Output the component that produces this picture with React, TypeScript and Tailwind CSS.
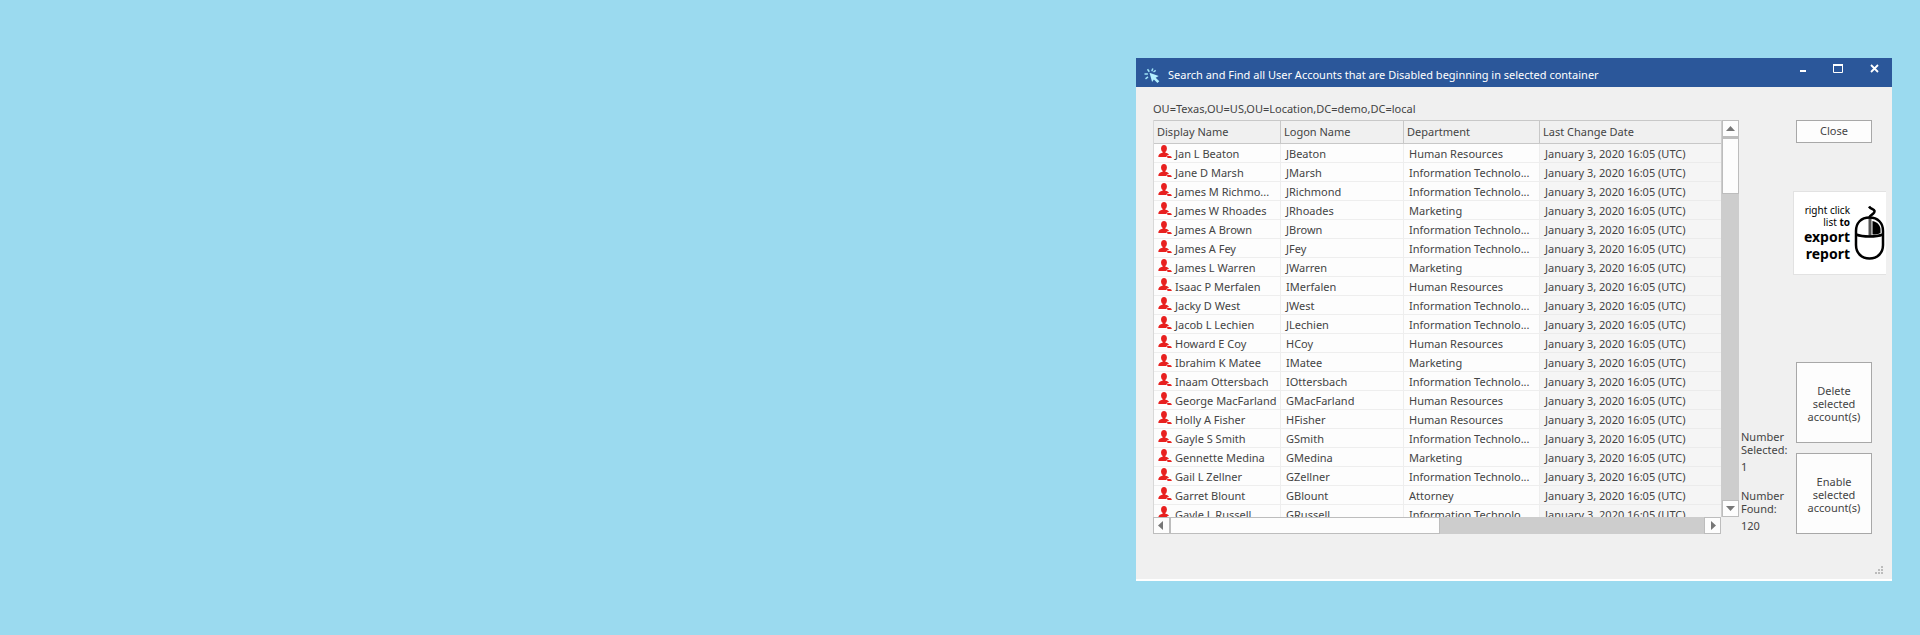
import type { ReactNode } from "react";

// long names are shortened the way the list shows them
const IT = "Information Technolo...";
const HR = "Human Resources";
const CHANGED = "January 3, 2020 16:05 (UTC)";

const ACCOUNTS = [
  { name: "Jan L Beaton", logon: "JBeaton", department: HR },
  { name: "Jane D Marsh", logon: "JMarsh", department: IT },
  { name: "James M Richmo...", logon: "JRichmond", department: IT },
  { name: "James W Rhoades", logon: "JRhoades", department: "Marketing" },
  { name: "James A Brown", logon: "JBrown", department: IT },
  { name: "James A Fey", logon: "JFey", department: IT },
  { name: "James L Warren", logon: "JWarren", department: "Marketing" },
  { name: "Isaac P Merfalen", logon: "IMerfalen", department: HR },
  { name: "Jacky D West", logon: "JWest", department: IT },
  { name: "Jacob L Lechien", logon: "JLechien", department: IT },
  { name: "Howard E Coy", logon: "HCoy", department: HR },
  { name: "Ibrahim K Matee", logon: "IMatee", department: "Marketing" },
  { name: "Inaam Ottersbach", logon: "IOttersbach", department: IT },
  { name: "George MacFarland", logon: "GMacFarland", department: HR },
  { name: "Holly A Fisher", logon: "HFisher", department: HR },
  { name: "Gayle S Smith", logon: "GSmith", department: IT },
  { name: "Gennette Medina", logon: "GMedina", department: "Marketing" },
  { name: "Gail L Zellner", logon: "GZellner", department: IT },
  { name: "Garret Blount", logon: "GBlount", department: "Attorney" },
  { name: "Gayle L Russell", logon: "GRussell", department: IT },
];

function ClickIcon() {
  return (
    <svg width="16" height="15" viewBox="0 0 16 15" className="shrink-0" aria-hidden="true">
      <path d="M3.5 1.2l1.8 2.6M8.8 0.5l-1 2.7M0.5 6h3.4M1.5 10.8l2.5-2M9.5 4l2.2-1.6" stroke="#9fe3f7" strokeWidth="1.5" fill="none" />
      <path d="M5.5 4.8l9.2 3.2-3 1.8 3.6 3.4-1.900 1.700-3.500-3.500-1.800 2.600z" fill="#b4f0ff" />
    </svg>
  );
}

function UserIcon() {
  return (
    <svg width="14" height="13" viewBox="0 0 14 13" className="-mt-px shrink-0" aria-hidden="true">
      <ellipse cx="6" cy="3.5" rx="2.900" ry="3.500" fill="#e8201f" />
      <path d="M4.600 6h2.800v1.700c1.800.3 3.300 1 3.600 2.300-1.600.1-2.400.6-2.500 2H.3C.3 9.300 2 8.100 4.600 7.700z" fill="#e8201f" />
      <path d="M9.200 11h2.200c1.300 0 2.300.6 2.400 2H10.200c-1 0-1.300-.8-1-2z" fill="#e8201f" />
    </svg>
  );
}

function MouseIcon() {
  return (
    <svg width="31" height="56" viewBox="0 0 31 56" className="shrink-0" aria-hidden="true">
      <path d="M18.500 16V29.500c3.500 0 6-.5 8-1.500v-3c0-4.500-3-8-8-9z" fill="#000" />
      <path d="M16 12v19" stroke="#555" strokeWidth="3" />
      <path d="M15.500 12.500C7 12.500 2 18 2 26v14c0 8 5.500 13.500 13.500 13.500S29 48 29 40V26c0-8-5-13.500-13.500-13.500z" stroke="#000" strokeWidth="2.500" fill="none" />
      <path d="M2 29.500c7 2.700 20 2.700 27 0M15.500 12.500c0-3 5.500-3 5-6.500-.2-2-3.500-1.500-5.500-4.500" stroke="#000" strokeWidth="2.500" fill="none" />
    </svg>
  );
}

function ScrollButton({ label, d }: { label: string; d: string }) {
  return (
    <button aria-label={label} className="flex size-[17px] shrink-0 items-center justify-center border border-[#bdbdbd] bg-[#fdfdfd]">
      <svg width="9" height="9" viewBox="0 0 9 9" aria-hidden="true">
        <path d={d} fill="#777" />
      </svg>
    </button>
  );
}

function ActionButton({ children }: { children: ReactNode }) {
  return (
    <button className="flex h-[81px] w-[76px] items-center justify-center border border-[#a8a8a8] bg-[#fdfdfd] px-2 pt-[2px] text-center leading-[13px]">
      {children}
    </button>
  );
}

function AccountTable() {
  return (
    <div className="h-[397px] overflow-hidden border-l border-[#d8d8d8]">
      <table className="w-full table-fixed border-separate border-spacing-0 text-left">
        <colgroup>
          <col className="w-[127px]" />
          <col className="w-[123px]" />
          <col className="w-[136px]" />
          <col />
        </colgroup>
        <thead>
          <tr>
            {["Display Name", "Logon Name", "Department", "Last Change Date"].map((title) => (
              <th key={title} className="h-6 border-y border-r border-[#c8c8c8] bg-[#f0f0f0] p-0 pl-[3px] font-normal last:border-r-0">
                {title}
              </th>
            ))}
          </tr>
        </thead>
        <tbody>
          {ACCOUNTS.map((account) => (
            <tr key={account.logon} className="bg-[#fdfdfd] leading-4">
              <td className="border-r border-b border-[#eeeeee] p-0 pt-[2px] pl-1">
                <div className="flex h-4 gap-[3px]">
                  <UserIcon />
                  <span className="whitespace-nowrap">{account.name}</span>
                </div>
              </td>
              <td className="border-r border-b border-[#eeeeee] p-0 pt-[2px] pl-[5px] whitespace-nowrap">{account.logon}</td>
              <td className="border-r border-b border-[#eeeeee] p-0 pt-[2px] pl-[5px] whitespace-nowrap">{account.department}</td>
              <td className="border-b border-[#ebebeb] bg-[#f5f5f5] p-0 pt-[2px] pl-[5px] whitespace-nowrap">{CHANGED}</td>
            </tr>
          ))}
        </tbody>
      </table>
    </div>
  );
}

function TitleBar() {
  return (
    <header className="flex h-[29px] bg-[#2b579a] pl-2 text-white">
      <div className="flex min-w-0 flex-1 items-center gap-2 pt-[5px]">
        <ClickIcon />
        <h1 className="truncate">Search and Find all User Accounts that are Disabled beginning in selected container</h1>
      </div>
      <div className="flex h-5 items-center">
        <button aria-label="Minimize" className="flex h-5 w-9 items-center justify-center">
          <svg width="9" height="9" viewBox="0 0 9 9">
            <path d="M2 6h6v2H2z" fill="#fff" />
          </svg>
        </button>
        <button aria-label="Maximize" className="flex h-5 w-9 items-center justify-center">
          <svg width="10" height="9" viewBox="0 0 10 9">
            <path d="M.5 1h9v7.500h-9z" stroke="#fff" fill="none" />
            <path d="M0 0h10v2H0z" fill="#fff" />
          </svg>
        </button>
        <button aria-label="Close window" className="flex h-5 w-9 items-center justify-center">
          <svg width="9" height="9" viewBox="0 0 9 9">
            <path d="M1 1l7 7M8 1L1 8" stroke="#fff" strokeWidth="1.800" />
          </svg>
        </button>
      </div>
    </header>
  );
}

export default function App() {
  return (
    <div className="flex min-h-screen items-start justify-end bg-[#9bdaef] px-7 pt-[58px] font-['Noto_Sans','Open_Sans',sans-serif] text-[11px] text-[#444]">
      <main className="w-full max-w-[756px] border-b-2 border-white bg-[#f0f0f0]">
        <TitleBar />

        <div className="pt-3 pr-[6px] pl-[17px]">
          <p className="h-[21px] leading-5">OU=Texas,OU=US,OU=Location,DC=demo,DC=local</p>

          <div className="flex">
            <div className="min-w-0 flex-1">
              <AccountTable />
              <div className="flex bg-[#cdcdcd]">
                <ScrollButton label="Scroll left" d="M6 0v9L1 4.500z" />
                <div className="w-[270px] border border-[#bdbdbd] bg-[#fdfdfd]" />
                <div className="flex-1" />
                <ScrollButton label="Scroll right" d="M3 0v9l5-4.500z" />
              </div>
            </div>

            <div className="flex h-[397px] w-[18px] shrink-0 flex-col items-center bg-[#cdcdcd]">
              <ScrollButton label="Scroll up" d="M0 7h9L4.500 2z" />
              <div className="h-[57px] w-[17px] border border-t-2 border-[#bdbdbd] bg-[#fdfdfd]" />
              <div className="flex-1" />
              <ScrollButton label="Scroll down" d="M0 2h9L4.500 7z" />
            </div>

            <dl className="flex w-[54px] shrink-0 flex-col justify-end pl-[2px] leading-[13px]">
              <dt>Number Selected:</dt>
              <dd className="pt-1 pb-4">1</dd>
              <dt>Number Found:</dt>
              <dd className="pt-1 pb-[2px]">120</dd>
            </dl>

            <div className="flex w-[93px] shrink-0 flex-col pl-[3px]">
              <button className="h-[23px] w-[76px] border border-[#a8a8a8] bg-[#fdfdfd]">Close</button>
              <div className="mt-12 -ml-[3px] flex h-[84px] items-center justify-between border border-r-0 border-[#e2e2e2] bg-white pr-[1px] text-black">
                <p className="flex-1 pr-1 text-right">
                  <span className="block text-[10px] leading-3 whitespace-nowrap">right click</span>
                  <span className="block text-[10px] leading-3">
                    list <b>to</b>
                  </span>
                  <b className="block text-[14px] leading-[17px]">export</b>
                  <b className="block text-[14px] leading-[17px]">report</b>
                </p>
                <MouseIcon />
              </div>
              <div className="mt-auto flex flex-col gap-[10px]">
                <ActionButton>Delete selected account(s)</ActionButton>
                <ActionButton>Enable selected account(s)</ActionButton>
              </div>
            </div>
          </div>

          <div className="flex h-[45px] items-end justify-end pr-[3px] pb-[5px]">
            <svg width="9" height="8" viewBox="0 0 9 8" aria-hidden="true">
              <path d="M7 0h2v2H7zM4 3h2v2H4zM7 3h2v2H7zM1 6h2v2H1zM4 6h2v2H4zM7 6h2v2H7z" fill="#bcbcbc" />
            </svg>
          </div>
        </div>
      </main>
    </div>
  );
}
